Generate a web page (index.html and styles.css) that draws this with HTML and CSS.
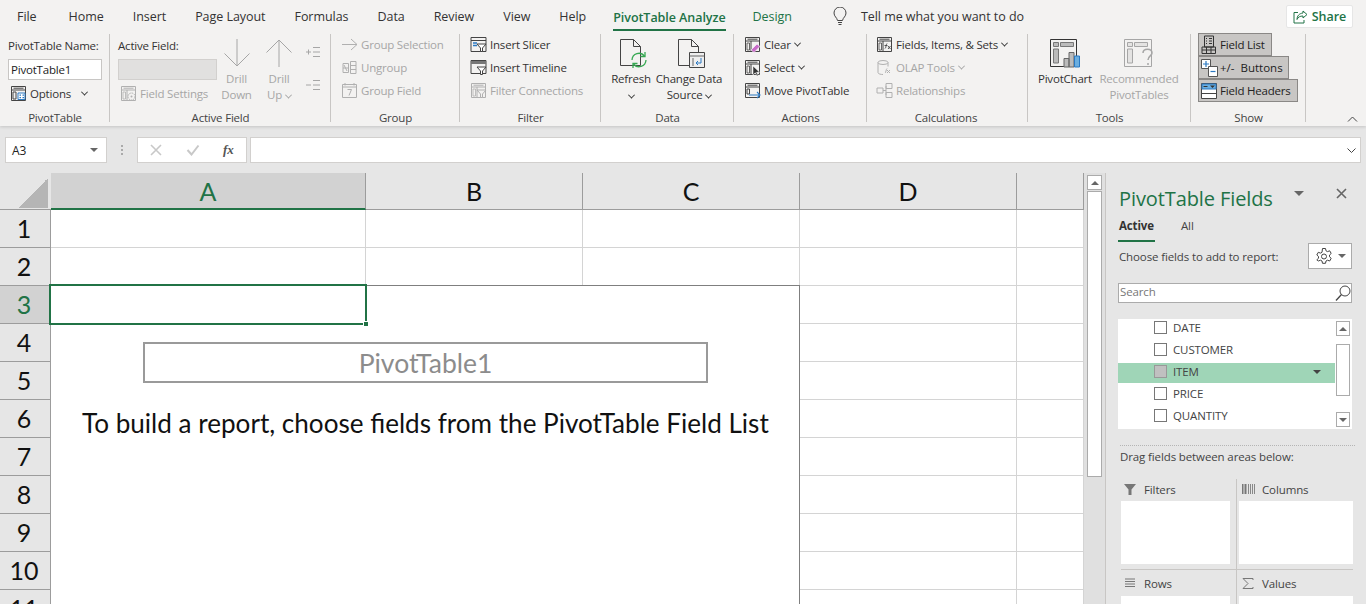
FILE: index.html

```html
<!DOCTYPE html>
<html lang="en">
<head>
  <meta charset="UTF-8">
  <title>PivotTable1 - Excel</title>
  <link rel="stylesheet" href="styles.css">
</head>
<body>
  <svg class="sprites" aria-hidden="true">
    <symbol id="i-frame" viewBox="0 0 17 17">
      <path d="M1.500 1.500h14v14h-14z M1.500 5h14 M3.500 3.200h10 M7 5v10.500" fill="none" stroke="currentColor"/>
      <path d="M3 7h2.500v7H3z" fill="none" stroke="currentColor" stroke-width=".8"/>
    </symbol>
    <symbol id="i-fields" viewBox="0 0 17 17">
      <use href="#i-frame"/>
      <path d="M9 12.500c1 0 1-4.500 2-5 M8.500 9.500h3 M12 10l2.500 3 M14.500 10L12 13" fill="none" stroke="currentColor" stroke-width=".9"/>
    </symbol>
  </svg>

  <header class="ribbon">
    <nav class="tabs">
      <span class="tab-file">File</span><span>Home</span><span>Insert</span><span>Page Layout</span><span>Formulas</span><span>Data</span><span>Review</span><span>View</span><span>Help</span>
      <span class="tab-on">PivotTable Analyze</span><span class="tab-ctx">Design</span>
      <svg class="bulb" width="14" height="19" viewBox="0 0 14 19"><path d="M4.500 13.500C4 10.500 1 9.500 1 6a6 6 0 0 1 12 0c0 3.500-3 4.500-3.500 7.500z M5 15.500h4 M5.500 17.500h3" fill="none" stroke="#444"/></svg>
      <span class="tell">Tell me what you want to do</span>
      <span class="share">
        <svg width="15" height="14" viewBox="0 0 15 14"><path d="M10 1l4 3.500L10 8V6C7 6 5 7 4 9.500 4 6 6 3.500 10 3z M5 2.500H1v10.500h10v-3" fill="none" stroke="#217346"/></svg>
        Share
      </span>
    </nav>

    <div class="groups">
      <section class="group g-table">
        <div class="body stack pad8">
          <div class="field-label">PivotTable Name:</div>
          <div class="name-input">PivotTable1</div>
          <div class="row options">
            <svg class="ico" viewBox="0 0 17 17"><path d="M1.500 1.500h14v14h-14z M1.500 5h14 M3.500 3.200h10 M3 7h3v7H3z" fill="none" stroke="#444"/><path d="M8 8h7v6.500H8z" fill="#fff" stroke="#2b79c2"/><path d="M9.500 9.500h1.500v1.200H9.500zM12.500 9.500H14v1.200h-1.500zM9.500 12h1.500v1.200H9.500zM12.500 12H14v1.200h-1.500z" fill="#2b79c2"/></svg>
            Options <i class="chev chev-wide"></i>
          </div>
        </div>
        <div class="label">PivotTable</div>
      </section>

      <section class="group g-active">
        <div class="body cols pad8">
          <div class="stack active-col">
            <div class="field-label">Active Field:</div>
            <div class="off-input"></div>
            <div class="row off">
              <svg class="ico" viewBox="0 0 17 17"><use href="#i-frame"/><circle cx="11.500" cy="11.500" r="3.500" fill="#f3f2f1" stroke="currentColor" stroke-dasharray="1.500 .8"/><circle cx="11.500" cy="11.500" r="1" fill="currentColor"/></svg>
              Field Settings
            </div>
          </div>
          <div class="big off drill-d">
            <svg width="28" height="30" viewBox="0 0 28 30"><path d="M14 1v27 M1.500 15.500L14 28l12.500-12.500" fill="none" stroke="currentColor"/></svg>
            <div>Drill<br>Down</div>
          </div>
          <div class="big off drill-u">
            <svg width="28" height="30" viewBox="0 0 28 30"><path d="M14 29V2 M1.500 14.500L14 2l12.500 12.500" fill="none" stroke="currentColor"/></svg>
            <div>Drill<br>Up <i class="chev"></i></div>
          </div>
          <div class="plusminus off">
            <svg width="16" height="12" viewBox="0 0 16 12"><path d="M1 6h5 M3.500 3.500v5 M8 1.500h7 M8 6h7 M8 10.500h7" fill="none" stroke="currentColor"/></svg>
            <svg width="16" height="12" viewBox="0 0 16 12"><path d="M1 6h5 M8 1.500h7 M8 6h7 M8 10.500h7" fill="none" stroke="currentColor"/></svg>
          </div>
        </div>
        <div class="label">Active Field</div>
      </section>

      <section class="group g-group">
        <div class="body stack rows3 off">
          <div class="row"><svg class="ico" viewBox="0 0 17 17"><path d="M1 8.500h15 M10 3l6 5.500-6 5.500" fill="none" stroke="currentColor"/></svg>Group Selection</div>
          <div class="row"><svg class="ico" viewBox="0 0 17 17"><path d="M2 4.500h5.500v9H2z M9.500 2.500h5.500v12H9.500z M9.500 6.500h5.500 M9.500 10.500h5.500 M2 9h5.500 M3 6l3 6" fill="none" stroke="currentColor"/></svg>Ungroup</div>
          <div class="row"><svg class="ico" viewBox="0 0 17 17"><path d="M1.500 2.500h14v13h-14z M1.500 5h14 M4 1v2.500 M13 1v2.500 M6.500 7.500h4l-2.500 6" fill="none" stroke="currentColor"/></svg>Group Field</div>
        </div>
        <div class="label">Group</div>
      </section>

      <section class="group g-filter">
        <div class="body stack rows3">
          <div class="row"><svg class="ico" viewBox="0 0 17 17"><path d="M1 1.500h15v14H1z M1 4.500h15" fill="none" stroke="#444"/><path d="M3 7h4M3 9.500h4" stroke="#2b79c2" stroke-width="1.500"/><path d="M7 8h9l-3.500 4v3.500h-2V12z" fill="#fff" stroke="#444"/></svg>Insert Slicer</div>
          <div class="row"><svg class="ico" viewBox="0 0 17 17"><path d="M1 1.500h15v13H1z" fill="none" stroke="#444"/><path d="M1 2h15v3H1z" fill="#777"/><path d="M7 8h9l-3.500 4v3.500h-2V12z" fill="#fff" stroke="#444"/></svg>Insert Timeline</div>
          <div class="row off"><svg class="ico" viewBox="0 0 17 17"><use href="#i-frame"/><path d="M7 8h9l-3.500 4v3.500h-2V12z" fill="#f3f2f1" stroke="currentColor"/></svg>Filter Connections</div>
        </div>
        <div class="label">Filter</div>
      </section>

      <section class="group g-data">
        <div class="body cols">
          <div class="big refresh">
            <svg width="32" height="32" viewBox="0 0 32 32"><path d="M1.500 1.500h13l7 7v19h-20z M14.500 1.500v7h7" fill="#f3f2f1" stroke="#444"/><path d="M13 22a7 7 0 0 1 12.500-4 M27 22a7 7 0 0 1-12.500 4" fill="none" stroke="#36a852" stroke-width="1.300"/><path d="M26 14v4.500h-4.500 M14 30v-4.500h4.500" fill="none" stroke="#36a852" stroke-width="1.300"/></svg>
            <div>Refresh<br><i class="chev"></i></div>
          </div>
          <div class="big change">
            <svg width="32" height="32" viewBox="0 0 32 32"><path d="M1.500 1.500h13l7 7v19h-20z M14.500 1.500v7h7" fill="#f3f2f1" stroke="#444"/><path d="M12.500 14.500h15v15h-15z" fill="#eee" stroke="#444"/><path d="M12.500 18h15 M16 20v8" stroke="#666"/><path d="M24 20v5h-5 M21 23l-2 2 2 2" fill="none" stroke="#2b79c2"/></svg>
            <div>Change Data<br>Source <i class="chev"></i></div>
          </div>
        </div>
        <div class="label">Data</div>
      </section>

      <section class="group g-actions">
        <div class="body stack rows3">
          <div class="row"><svg class="ico" viewBox="0 0 17 17"><use href="#i-frame" color="#444"/><path d="M7 14l6-6 3 2.500-6 6z" fill="#c86cc8" stroke="#fff" stroke-width=".6"/></svg>Clear <i class="chev"></i></div>
          <div class="row"><svg class="ico" viewBox="0 0 17 17"><use href="#i-frame" color="#444"/><path d="M9 7v9l2.300-2.200L13 17l1.200-.6-1.600-3.100h3z" fill="#333" stroke="#fff" stroke-width=".5"/></svg>Select <i class="chev"></i></div>
          <div class="row"><svg class="ico" viewBox="0 0 17 17"><path d="M1.500 1.500h14v14h-14z M1.500 5h14 M3.500 3.200h10 M3 7h2.500v5H3z" fill="none" stroke="#444"/><path d="M5 13h11 M13 10l3 3-3 3" fill="none" stroke="#2b79c2" stroke-width="1.100"/></svg>Move PivotTable</div>
        </div>
        <div class="label">Actions</div>
      </section>

      <section class="group g-calc">
        <div class="body stack rows3">
          <div class="row"><svg class="ico"><use href="#i-fields" color="#444"/></svg>Fields, Items, &amp; Sets <i class="chev"></i></div>
          <div class="row off"><svg class="ico" viewBox="0 0 17 17"><ellipse cx="7" cy="3.500" rx="5" ry="2" fill="none" stroke="currentColor"/><path d="M2 3.500v10c0 1.500 3 2 5 2 M12 3.500v4 M9 14c1 0 1-4 2-4.500 M11 11l3 3 M14 11l-3 3" fill="none" stroke="currentColor"/></svg>OLAP Tools <i class="chev"></i></div>
          <div class="row off"><svg class="ico" viewBox="0 0 17 17"><path d="M1 6h6v5H1z M10 1.500h6v5h-6z M10 10.500h6v5h-6z M7 8.500h3 M10 4v9" fill="none" stroke="currentColor"/></svg>Relationships</div>
        </div>
        <div class="label">Calculations</div>
      </section>

      <section class="group g-tools">
        <div class="body cols">
          <div class="big chart">
            <svg width="32" height="30" viewBox="0 0 32 30"><path d="M1.500 1.500h26v27h-26z" fill="none" stroke="#333"/><path d="M4.500 4.500h5v4h-5zM11.500 4.500h13v4h-13zM4.500 11h5v14h-5z" fill="#bbb" stroke="#777"/><path d="M15 20.500h5v8.500h-5zM20 14.500h5v14.500h-5z" fill="#bbb" stroke="#666"/><path d="M25.500 18h5v11h-5z" fill="#6aaee0" stroke="#2b79c2"/></svg>
            <div>PivotChart</div>
          </div>
          <div class="big off recommended">
            <svg width="32" height="30" viewBox="0 0 32 30"><path d="M1.500 1.500h27v27h-27z" fill="none" stroke="currentColor"/><path d="M4.500 4.500h5v4h-5zM11.500 4.500h13v4h-13zM4.500 11h5v14h-5z" fill="#e4e3e2" stroke="currentColor"/><path d="M20 15c0-5 9-5 9 0 0 3-4 3-4 7 M25 25v2" fill="none" stroke="currentColor" stroke-width="1.500"/></svg>
            <div>Recommended<br>PivotTables</div>
          </div>
        </div>
        <div class="label">Tools</div>
      </section>

      <section class="group g-show">
        <div class="body stack toggles">
          <div class="toggle"><svg width="16" height="19" viewBox="0 0 16 19"><path d="M3.500 1h9v11h-9z M1 12h13.500v6.500H1z M1 15h13.500 M5.500 12v6.500 M10 12v6.500" fill="none" stroke="#333"/><path d="M5 3.500h1M8 3.500h3M5 6h1M8 6h3M5 8.500h1M8 8.500h3" stroke="#333"/></svg><span>Field List</span></div>
          <div class="toggle toggle-wide"><svg width="17" height="18" viewBox="0 0 17 18"><path d="M.5 .5h9v9h-9z" fill="#fff" stroke="#555"/><path d="M2 5h6M5 2v6" stroke="#2b79c2" stroke-width="1.200"/><path d="M7.500 7.500h9v10h-9z" fill="#fff" stroke="#555"/><path d="M9.500 12.500h5" stroke="#2b79c2" stroke-width="1.200"/></svg><span>+/- Buttons</span></div>
          <div class="toggle"><svg width="16" height="16" viewBox="0 0 16 16"><path d="M.5 .5h15v15H.5z" fill="#fff" stroke="#444"/><path d="M1 1h14v5H1z" fill="#6aaee0" stroke="#2b79c2"/><path d="M2.500 3.500h4" stroke="#333"/><path d="M9 2.500h5L11.500 5z" fill="#333"/><path d="M1 10.500h14" stroke="#444"/></svg><span>Field Headers</span></div>
        </div>
        <div class="label">Show</div>
      </section>
      <svg class="collapse" width="11" height="6" viewBox="0 0 11 6"><path d="M1 5.500l4.500-4.500 4.500 4.500" fill="none" stroke="#444"/></svg>
    </div>
  </header>

  <div class="formula-bar">
    <div class="name-box">A3 <i class="tri"></i></div>
    <div class="grip"></div>
    <div class="fx-box">
      <svg width="14" height="12" viewBox="0 0 14 12"><path d="M2 1l10 10 M12 1L2 11" stroke="#c8c8c8" stroke-width="1.600"/></svg>
      <svg width="14" height="12" viewBox="0 0 14 12"><path d="M1.500 6l4 4.500 7-9" fill="none" stroke="#c8c8c8" stroke-width="2"/></svg>
      <span class="fx">fx</span>
    </div>
    <div class="formula-input"><svg width="9" height="5" viewBox="0 0 9 5"><path d="M.5 .5l4 4 4-4" fill="none" stroke="#444"/></svg></div>
  </div>

  <main class="work">
    <div class="sheet">
      <div class="corner"><i></i></div>
      <div class="col-h col-sel">A</div>
      <div class="col-h">B</div>
      <div class="col-h">C</div>
      <div class="col-h">D</div>
      <div class="col-h"></div>

      <div class="row-h">1</div><div class="cell"></div><div class="cell"></div><div class="cell"></div><div class="cell"></div><div class="cell"></div>
      <div class="row-h">2</div><div class="cell"></div><div class="cell"></div><div class="cell"></div><div class="cell"></div><div class="cell"></div>
      <div class="row-h row-sel">3</div><div class="cell c-d"></div><div class="cell c-e"></div>
      <div class="row-h">4</div><div class="cell c-d"></div><div class="cell c-e"></div>
      <div class="row-h">5</div><div class="cell c-d"></div><div class="cell c-e"></div>
      <div class="row-h">6</div><div class="cell c-d"></div><div class="cell c-e"></div>
      <div class="row-h">7</div><div class="cell c-d"></div><div class="cell c-e"></div>
      <div class="row-h">8</div><div class="cell c-d"></div><div class="cell c-e"></div>
      <div class="row-h">9</div><div class="cell c-d"></div><div class="cell c-e"></div>
      <div class="row-h">10</div><div class="cell c-d"></div><div class="cell c-e"></div>
      <div class="row-h">11</div><div class="cell c-d"></div><div class="cell c-e"></div>

      <div class="placeholder">
        <div class="pt-name">PivotTable1</div>
        <div class="pt-hint">To build a report, choose fields from the PivotTable Field List</div>
      </div>
      <div class="active-cell"><i></i></div>
    </div>

    <div class="vscroll">
      <div class="sb-btn"><i class="tri tri-up"></i></div>
      <div class="sb-thumb"></div>
    </div>

    <aside class="pane">
      <div class="pane-head">
        <h2>PivotTable Fields</h2>
        <i class="tri pane-menu"></i>
        <svg class="pane-x" width="11" height="11" viewBox="0 0 11 11"><path d="M1 1l9 9M10 1l-9 9" stroke="#666" stroke-width="1.600"/></svg>
      </div>
      <div class="pane-tabs"><span class="pane-tab-on">Active</span><span>All</span></div>
      <div class="choose">
        <span>Choose fields to add to report:</span>
        <div class="gear-btn">
          <svg width="18" height="18" viewBox="0 0 18 18"><path d="M7.500 1.500h3l.5 2.300 1.500.8 2.200-.8 1.500 2.700-1.700 1.500v1.800l1.700 1.500-1.500 2.700-2.200-.8-1.500.8-.5 2.300h-3l-.5-2.300-1.500-.8-2.200.8L1.800 12.800 3.500 11.300V9.500L1.800 8l1.500-2.700 2.200.8L7 5.300z" fill="none" stroke="#444"/><circle cx="9" cy="9.500" r="2.500" fill="none" stroke="#444"/></svg>
          <i class="tri"></i>
        </div>
      </div>
      <div class="search">
        <span>Search</span>
        <svg width="16" height="17" viewBox="0 0 16 17"><circle cx="10" cy="6" r="5" fill="none" stroke="#444"/><path d="M6.500 9.500L1 15.500" stroke="#444" stroke-width="1.300"/></svg>
      </div>
      <div class="field-list">
        <ul>
          <li><i class="check"></i>DATE</li>
          <li><i class="check"></i>CUSTOMER</li>
          <li class="field-on"><i class="check"></i>ITEM<i class="tri field-tri"></i></li>
          <li><i class="check"></i>PRICE</li>
          <li><i class="check"></i>QUANTITY</li>
        </ul>
        <div class="list-sb">
          <div class="sb-btn"><i class="tri tri-up"></i></div>
          <div class="list-thumb"></div>
          <div class="sb-btn"><i class="tri"></i></div>
        </div>
      </div>
      <div class="drag-text">Drag fields between areas below:</div>
      <div class="areas">
        <div class="area area-top">
          <div class="area-title"><svg width="13" height="11" viewBox="0 0 13 11"><path d="M0 0h12L7.500 5.500V11h-3V5.500z" fill="#777"/></svg>Filters</div>
          <div class="area-box"></div>
        </div>
        <div class="area area-top area-right">
          <div class="area-title"><svg width="13" height="11" viewBox="0 0 13 11"><path d="M.5 0v10 M3.500 0v10" stroke="#777" stroke-width="2"/><path d="M6.500 0v10M8.500 0v10M10.500 0v10M12.500 0v10" stroke="#888"/></svg>Columns</div>
          <div class="area-box"></div>
        </div>
        <div class="area">
          <div class="area-title"><svg width="13" height="11" viewBox="0 0 13 11"><path d="M1 1h10M1 3.500h10M1 6h10M1 8.500h10" stroke="#777" stroke-width="1.200"/></svg>Rows</div>
          <div class="area-box"></div>
        </div>
        <div class="area area-right">
          <div class="area-title"><svg width="13" height="11" viewBox="0 0 13 11"><path d="M11 2V.5H1l5 5-5 5h10V9" fill="none" stroke="#777"/></svg>Values</div>
          <div class="area-box"></div>
        </div>
      </div>
    </aside>
  </main>
</body>
</html>
```

FILE: styles.css

```css
* {
  box-sizing: border-box;
}
html, body {
  margin: 0;
  height: 604px;
  overflow: hidden;
}
body {
  background: #e6e6e6;
  font-family: "Open Sans", sans-serif;
  font-size: 11.5px;
  letter-spacing: -0.2px;
  color: #333;
}
.sprites {
  width: 0;
  height: 0;
  position: absolute;
}

/* ribbon */
.ribbon {
  height: 126px;
  background: #f3f2f1;
  box-shadow: 0 1px 3px rgba(0, 0, 0, 0.15);
}
.tabs {
  height: 33px;
  display: flex;
  align-items: center;
  gap: 29px;
  padding: 0 13px 0 17px;
  font-size: 12.5px;
  letter-spacing: 0;
}
.tabs > span {
  letter-spacing: -0.05px;
}
.tab-file {
  margin-right: 3px;
}
.tab-on {
  color: #217346;
  font-weight: 600;
  box-shadow: 0 2px 0 #217346;
  padding: 4px 0 3px;
  margin: 1px -2px 0 -2px;
}
.tab-ctx {
  color: #217346;
}
.bulb {
  margin-left: 12px;
  margin-right: -15px;
}
.tell {
  flex: 1;
}
.share {
  width: 67px;
  height: 23px;
  background: #fff;
  border: 1px solid #e6e6e6;
  border-radius: 2px;
  color: #217346;
  font-weight: 600;
  display: flex;
  align-items: center;
  justify-content: center;
  gap: 4px;
}
.groups {
  display: flex;
  height: 92px;
  position: relative;
}
.group {
  display: flex;
  flex-direction: column;
  background: linear-gradient(#c8c6c4, #c8c6c4) right 1px / 1px 88px no-repeat;
}
.body {
  flex: 1;
  min-height: 0;
}
.pad8 {
  padding-left: 8px;
}
.label {
  height: 14px;
  line-height: 14px;
  text-align: center;
  color: #444;
}
.g-table { width: 110px; }
.g-active { width: 221px; }
.g-group { width: 129px; }
.g-filter { width: 141px; }
.g-data { width: 133px; }
.g-actions { width: 133px; }
.g-calc { width: 161px; }
.g-calc .label { padding-right: 3px; }
.g-calc .rows3 { padding-left: 9px; }
.g-tools { width: 163px; }
.g-show { width: 115px; }
.stack {
  display: flex;
  flex-direction: column;
}
.cols {
  display: flex;
}
.row {
  display: flex;
  align-items: center;
  gap: 3px;
  height: 23px;
  white-space: nowrap;
}
.ico {
  width: 17px;
  height: 17px;
  flex: none;
  color: #555;
}
.off {
  color: #a6a6a6;
}
.off .ico {
  color: #b0b0b0;
}
.chev {
  display: inline-block;
  width: 5px;
  height: 5px;
  border-right: 1px solid currentColor;
  border-bottom: 1px solid currentColor;
  transform: rotate(45deg) translate(-1px, -1px);
  margin-left: 1px;
}
.chev-wide {
  margin-left: 8px;
}
.field-label {
  height: 26px;
  line-height: 26px;
}
.name-input {
  width: 94px;
  height: 21px;
  background: #fff;
  border: 1px solid #c8c6c4;
  padding-left: 2px;
  line-height: 19px;
  color: #222;
}
.options {
  margin: 2px 0 0 2px;
}
.active-col {
  width: 103px;
  flex: none;
}
.off-input {
  width: 99px;
  height: 21px;
  background: #e1e0df;
  border: 1px solid #d2d0ce;
}
.active-col .row {
  margin: 2px 0 0 2px;
}
.big {
  display: grid;
  grid-template-rows: 33px auto;
  justify-items: center;
  align-content: start;
  text-align: center;
  white-space: nowrap;
  padding-top: 5px;
  line-height: 16px;
}
.drill-d { width: 31px; }
.drill-u { width: 28px; margin-left: 13px; }
.plusminus {
  display: flex;
  flex-direction: column;
  gap: 21px;
  margin: 13px 0 0 12px;
}
.rows3 {
  padding: 0 0 0 10px;
}
.refresh { width: 44px; margin-left: 8px; }
.refresh svg { margin-left: 8px; }
.change { width: 72px; }
.change svg { margin-left: 8px; }
.chart { width: 62px; margin-left: 6px; }
.recommended { width: 86px; }
.toggles {
  padding: 0 0 0 7px;
  align-items: flex-start;
}
.toggle {
  height: 23px;
  display: grid;
  grid-template-columns: 17px auto;
  column-gap: 2px;
  align-items: center;
  padding: 0 6px 0 2px;
  background: #c8c6c4;
  border: 1px solid #8a8886;
  color: #222;
  white-space: nowrap;
}
.toggle-wide {
  word-spacing: 3px;
  letter-spacing: 0;
  padding-right: 5px;
}
.collapse {
  position: absolute;
  right: 8px;
  bottom: 3px;
}

/* formula bar */
.formula-bar {
  display: flex;
  height: 26px;
  margin-top: 11px;
  padding: 0 5px;
  font-size: 12px;
}
.name-box,
.fx-box,
.formula-input {
  background: #fff;
  border: 1px solid #d2d0ce;
  display: flex;
  align-items: center;
}
.name-box {
  width: 102px;
  justify-content: space-between;
  padding: 0 8px 0 6px;
  color: #222;
}
.grip {
  width: 2px;
  height: 10px;
  margin: 8px 14px 0 14px;
  border-left: 2px dotted #aaa;
}
.fx-box {
  width: 110px;
  gap: 23px;
  padding-left: 11px;
}
.fx {
  font-family: "Liberation Serif", serif;
  font-style: italic;
  font-weight: bold;
  font-size: 13px;
  color: #555;
}
.formula-input {
  flex: 1;
  margin-left: 3px;
  justify-content: flex-end;
  padding-right: 4px;
}
.tri {
  display: inline-block;
  width: 0;
  height: 0;
  border-left: 4px solid transparent;
  border-right: 4px solid transparent;
  border-top: 4px solid #666;
}
.tri-up {
  border-top: 0;
  border-bottom: 4px solid #666;
}

/* sheet */
.work {
  display: flex;
  margin-top: 10px;
  height: 431px;
  overflow: hidden;
}
.sheet {
  width: 1084px;
  flex: none;
  display: grid;
  grid-template-columns: 51px 315px 217px 217px 217px 67px;
  grid-template-rows: 37px repeat(11, 38px);
  font-family: Lato, sans-serif;
  letter-spacing: 0;
  color: #111;
  border-right: 1px solid #aaa;
}
.corner {
  background: #e6e6e6;
  border-bottom: 1px solid #9c9c9c;
  display: flex;
  align-items: flex-end;
  justify-content: flex-end;
  padding: 0 3px 1px 0;
}
.corner i {
  width: 30px;
  height: 30px;
  background: linear-gradient(135deg, transparent 50%, #b5b5b5 50%);
}
.col-h {
  background: #e6e6e6;
  border-right: 1px solid #9c9c9c;
  border-bottom: 1px solid #9c9c9c;
  font-size: 25px;
  line-height: 36px;
  text-align: center;
}
.col-sel {
  background: #d2d2d2;
  color: #217346;
  border-bottom: 2px solid #217346;
}
.row-h {
  grid-column: 1;
  background: #e6e6e6;
  border-right: 1px solid #9c9c9c;
  border-bottom: 1px solid #9c9c9c;
  font-size: 25px;
  line-height: 37px;
  text-align: center;
  padding-right: 2px;
}
.row-sel {
  background: #d2d2d2;
  color: #217346;
}
.cell {
  background: #fff;
  border-right: 1px solid #d4d4d4;
  border-bottom: 1px solid #d4d4d4;
}
.c-d { grid-column: 5; }
.c-e { grid-column: 6; }
.placeholder {
  grid-column: 2 / 5;
  grid-row: 4 / 13;
  background: #fff;
  border-top: 1px solid #7f7f7f;
  border-right: 1px solid #7f7f7f;
  margin-top: -1px;
  padding: 56px 0 0 31px;
  z-index: 1;
}
.pt-name {
  width: 565px;
  margin-left: 61px;
  height: 41px;
  border: 2px solid #9a9a9a;
  color: #8c8c8c;
  font-size: 26.5px;
  line-height: 39px;
  text-align: center;
}
.pt-hint {
  margin-top: 22px;
  font-size: 26.1px;
  line-height: 36px;
  white-space: nowrap;
}
.active-cell {
  grid-column: 2;
  grid-row: 4;
  border: 2px solid #217346;
  margin: -2px -1px -1px -2px;
  position: relative;
  z-index: 2;
}
.active-cell i {
  position: absolute;
  right: -4px;
  bottom: -4px;
  width: 6px;
  height: 6px;
  background: #217346;
  border: 1px solid #fff;
}

/* vertical scrollbar next to the sheet */
.vscroll {
  width: 22px;
  flex: none;
  padding: 2px 3px 0;
  border-right: 1px solid #c8c6c4;
  background: #e0e0e0;
}
.sb-btn {
  height: 15px;
  background: #fff;
  border: 1px solid #ababab;
  display: flex;
  align-items: center;
  justify-content: center;
}
.sb-thumb {
  height: 286px;
  background: #fff;
  border: 1px solid #ababab;
  margin-top: 1px;
}

/* task pane */
.pane {
  flex: 1;
  min-width: 0;
  padding: 0 14px 0 12px;
  font-size: 11.5px;
  letter-spacing: -0.12px;
  color: #444;
}
.pane-head {
  height: 43px;
  display: flex;
  align-items: center;
}
.pane-head h2 {
  margin: 8px 0 0 1px;
  font-size: 20px;
  font-weight: 400;
  letter-spacing: -0.1px;
  color: #217346;
  flex: 1;
}
.pane-menu {
  margin: 0 32px 2px 0;
  border-left-width: 5px;
  border-right-width: 5px;
  border-top-width: 5px;
}
.pane-x {
  margin: 0 5px 2px 0;
}
.pane-tabs {
  display: flex;
  gap: 26px;
  height: 26px;
  align-items: flex-start;
  line-height: 19px;
}
.pane-tab-on {
  font-weight: 700;
  color: #333;
  height: 26px;
  border-bottom: 2px solid #217346;
  padding: 0 1px;
}
.choose {
  display: flex;
  justify-content: space-between;
  align-items: center;
  height: 26px;
  margin-top: 1px;
  padding-left: 1px;
}
.gear-btn {
  width: 44px;
  height: 26px;
  background: #fff;
  border: 1px solid #ababab;
  display: flex;
  align-items: center;
  justify-content: center;
  gap: 5px;
}
.search {
  height: 20px;
  margin-top: 14px;
  background: #fff;
  border: 1px solid #ababab;
  display: flex;
  align-items: center;
  justify-content: space-between;
  padding-left: 1px;
  color: #777;
}
.search span {
  margin-top: -3px;
}
.field-list {
  margin-top: 16px;
  height: 110px;
  background: #fff;
  display: flex;
  overflow: hidden;
}
.field-list ul {
  flex: 1;
  margin: 0;
  padding: 0;
  list-style: none;
}
.field-list li {
  height: 20px;
  margin-bottom: 2px;
  display: flex;
  align-items: center;
  gap: 6px;
  padding: 0 0 3px 36px;
}
.field-on {
  background: #9fd5b7;
}
.check {
  width: 13px;
  height: 13px;
  border: 1px solid #777;
  background: #fff;
}
.field-on .check {
  background: #c0c0c0;
  border-color: #999;
}
.field-tri {
  margin-left: auto;
  margin-right: 14px;
  border-top-color: #444;
}
.list-sb {
  width: 17px;
  padding: 2px 2px 2px 1px;
  display: flex;
  flex-direction: column;
}
.list-thumb {
  height: 52px;
  margin-top: 8px;
  background: #fff;
  border: 1px solid #ababab;
  flex: none;
}
.list-sb .sb-btn:last-child {
  margin-top: auto;
}
.drag-text {
  margin: 16px -3px 0 2px;
  padding-top: 3px;
  height: 34px;
  border-top: 1px dotted #b5b5b5;
}
.areas {
  display: grid;
  grid-template-columns: 115px 117px;
  grid-template-rows: 91px 60px;
  margin-left: 3px;
}
.area-top {
  border-bottom: 1px solid #c8c6c4;
}
.area-right {
  border-left: 1px solid #c8c6c4;
  padding-left: 2px;
}
.area-title {
  height: 22px;
  display: flex;
  align-items: center;
  gap: 7px;
  padding: 0 0 2px 3px;
}
.area-box {
  width: 109px;
  height: 63px;
  background: #fff;
}
.area-right .area-box {
  width: 114px;
}
.area:nth-child(n+3) .area-title {
  height: 26px;
  padding-top: 2px;
}
```
